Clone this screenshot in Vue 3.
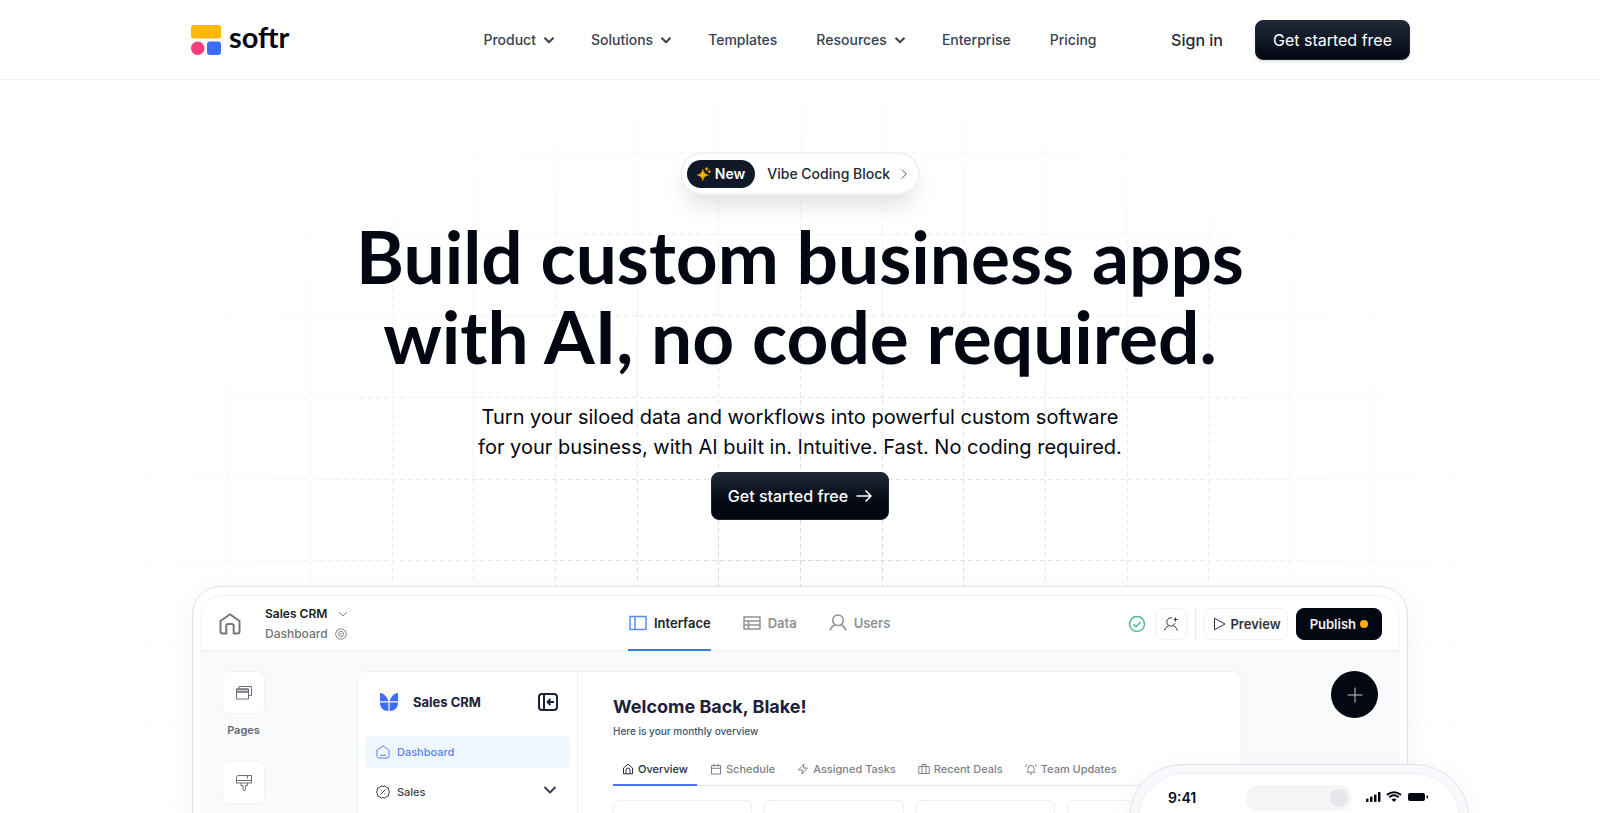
<script setup>
const navItems = [
  { label: 'Product', menu: true },
  { label: 'Solutions', menu: true },
  { label: 'Templates', menu: false },
  { label: 'Resources', menu: true },
  { label: 'Enterprise', menu: false },
  { label: 'Pricing', menu: false },
]

const editorTabs = [
  { label: 'Interface', icon: 'M2 3.5h16v13H2zM7 3.5v13', active: true },
  { label: 'Data', icon: 'M2 4h16v12H2zM2 8h16M2 12h16M6.5 8v8' },
  { label: 'Users', icon: 'M10 2a5.300 5.300 0 1 1 0 10.600a5.300 5.300 0 1 1 0-10.600M2 17.500c1-3.200 2.500-4.800 5-5.800M18 17.500c-1-3.200-2.500-4.800-5-5.800' },
]

const appTabs = [
  { label: 'Overview', icon: 'M1.500 5 6 1.200 10.500 5v5.800h-9zM4 10.800V7a2 2 0 0 1 4 0v3.800', active: true },
  { label: 'Schedule', icon: 'M1.500 2.500h9v8.500h-9zM1.500 5.300h9M3.800 1v2.500M8.200 1v2.500' },
  { label: 'Assigned Tasks', icon: 'M7 1 1.500 7H5.500L5 11 10.500 5H6.500z' },
  { label: 'Recent Deals', icon: 'M.8 3.500h10.400v7H.8zM4 10.500V1.500h4v9' },
  { label: 'Team Updates', icon: 'M2 9.200c1-1 1-2 1.200-4a2.800 2.800 0 0 1 5.600 0c.2 2 .2 3 1.200 4zM4.800 11h2.400M.8 4c0-1.200.5-2 1.200-2.700M11.200 4c0-1.200-.5-2-1.200-2.700' },
]

const at = (i) => Math.round((i * 245) / 3)
const columns = Array.from({ length: 19 }, (_, i) => 65 + at(i - 1))
const rows = Array.from({ length: 10 }, (_, i) => 72 + at(i))
</script>

<template>
  <div class="page">
    <header class="header">
      <div class="header-inner">
        <a class="logo" href="#" aria-label="softr">
          <svg width="30" height="30" viewBox="0 0 30 30" aria-hidden="true">
            <rect width="30" height="13.500" rx="2.500" fill="#ffb800" />
            <circle cx="6.700" cy="23.300" r="6.700" fill="#fa3c7d" />
            <rect x="16" y="16.500" width="14" height="13.500" rx="3" fill="#3b6cfa" />
          </svg>
          <span>softr</span>
        </a>
        <nav class="nav">
          <a v-for="item in navItems" :key="item.label" href="#">
            {{ item.label }}
            <svg v-if="item.menu" width="12" height="12" viewBox="0 0 12 12"><path d="M1.500 3.800 6 8.200 10.500 3.800" /></svg>
          </a>
        </nav>
        <div class="account">
          <a class="signin" href="#">Sign in</a>
          <a class="button small" href="#">Get started free</a>
        </div>
      </div>
    </header>

    <main class="hero">
      <svg class="grid" width="1600" height="734" viewBox="0 0 1600 734" aria-hidden="true">
        <path v-for="x in columns" :key="'c' + x" :d="`M${x}.5 0V734`" />
        <path v-for="y in rows" :key="'r' + y" :d="`M0 ${y}.5H1600`" />
      </svg>

      <a class="announce" href="#">
        <span class="badge">
          <svg width="14" height="14" viewBox="0 0 14 14" aria-hidden="true">
            <path d="M5.800 2.200C6.600 5.700 7.500 6.900 11.500 8 7.500 9.100 6.600 10.300 5.800 13.800 5 10.300 4.100 9.100.2 8 4.100 6.900 5 5.700 5.800 2.200zM9.700.1c.3 1.300.6 1.600 1.800 1.900-1.200.3-1.500.6-1.800 1.900-.3-1.300-.6-1.600-1.800-1.900 1.200-.3 1.500-.6 1.800-1.900zM12.400 3.100c.2 1.100.5 1.300 1.500 1.600-1 .2-1.300.5-1.500 1.600-.2-1.100-.5-1.400-1.500-1.600 1-.3 1.300-.5 1.500-1.600z" fill="#ffb000" stroke="#ffb000" stroke-width=".5" />
          </svg>
          New
        </span>
        <span>Vibe Coding Block</span>
        <svg class="next" width="6" height="10" viewBox="0 0 6 10" aria-hidden="true"><path d="M.8.5 5.300 5 .8 9.500" /></svg>
      </a>

      <h1>Build custom business apps<br />with AI, no code required.</h1>
      <p class="lead">
        Turn your siloed data and workflows into powerful custom software<br />for your business, with AI built in.
        Intuitive. Fast. No coding required.
      </p>
      <a class="button large" href="#">
        Get started free
        <svg width="16" height="14" viewBox="0 0 16 14" aria-hidden="true"><path d="M.5 7h14.500M9.500 1.500 15 7l-5.500 5.500" /></svg>
      </a>

      <div class="mockup">
        <div class="editor">
          <div class="toolbar">
            <div class="project">
              <svg class="home" width="22" height="22" viewBox="0 0 22 22"><path d="M1.500 8 11 1.200 20.500 8v10.500a2 2 0 0 1-2 2h-3.800V13a2 2 0 0 0-2-2H9.300a2 2 0 0 0-2 2v7.500H3.500a2 2 0 0 1-2-2z" /></svg>
              <div class="names">
                <span class="project-name">Sales CRM <svg width="10" height="6" viewBox="0 0 10 6"><path d="M1 1 5 5 9 1" /></svg></span>
                <span class="page-name">Dashboard <svg width="12" height="12" viewBox="0 0 12 12"><path d="M3.800 1h4.400L9 2.500h1.200L11.500 6l-1.300 3.500H9L8.200 11H3.800L3 9.500H1.800L.5 6l1.300-3.500H3zM6 3.200 8.300 4.600v2.800L6 8.800 3.700 7.400V4.600zM6 5v2" /></svg></span>
              </div>
            </div>
            <div class="editor-tabs">
              <a v-for="tab in editorTabs" :key="tab.label" href="#" :class="{ active: tab.active }">
                <svg width="20" height="20" viewBox="0 0 20 20"><path :d="tab.icon" /></svg>{{ tab.label }}
              </a>
            </div>
            <div class="actions">
              <svg class="saved" width="18" height="18" viewBox="0 0 18 18"><circle cx="9" cy="9" r="7.500" /><path d="m5.500 9.300 2.500 2.400 4.500-4.700" /></svg>
              <button class="tool square" type="button" aria-label="Invite user">
                <svg width="16" height="16" viewBox="0 0 16 16"><path d="M9.200 1.900A4.200 4.200 0 1 0 12 7.200M1.500 14.500c.8-2.400 2-3.700 4-4.500M14.500 14.500c-.8-2.400-2-3.700-4-4.500M12.500 1.500v4M10.500 3.500h4" /></svg>
              </button>
              <span class="divider"></span>
              <button class="tool preview" type="button">
                <svg width="13" height="14" viewBox="0 0 13 14"><path d="M1.500 1.200 12 7 1.500 12.800z" /></svg>Preview
              </button>
              <button class="tool publish" type="button">Publish<i></i></button>
            </div>
          </div>

          <div class="workspace">
            <div class="rail">
              <button class="tile" type="button" aria-labelledby="pages-label">
                <svg width="18" height="16" viewBox="0 0 18 16"><path fill="#c9cbce" d="M1.500 4h12v3h-12z" /><path d="M1.500 4h12v10h-12zM1.500 7h12M4 4V1.500h12.500v9h-3" /></svg>
              </button>
              <span id="pages-label" class="tile-label">Pages</span>
              <button class="tile" type="button" aria-label="Theme">
                <svg width="18" height="18" viewBox="0 0 18 18"><path d="M3.500 1.500h13V9h-15V3.500c0-1.200.8-2 2-2zM1.500 6.500h15M12.500 1.500v3M6 9v2.500h2V16q1.200 1.200 2.400 0v-4.500h2V9" /></svg>
              </button>
            </div>

            <div class="app">
              <aside class="side">
                <div class="brand">
                  <svg width="18" height="18" viewBox="0 0 18 18"><path fill="#3b6cfa" d="M0 0c4 .5 7 3.500 8.400 8.300H0zM18 0c-4 .5-7 3.500-8.400 8.300H18zM0 9.500h8.400V18C3.500 18 0 15 0 9.500zM18 9.500H9.600V18c4.900 0 8.400-3 8.400-8.500z" /></svg>
                  <strong>Sales CRM</strong>
                  <svg class="collapse" width="20" height="18" viewBox="0 0 20 18"><rect x="1" y="1" width="18" height="16" rx="3" /><path d="M6 1v16M16 9H9.500M12.500 6l-3 3 3 3" /></svg>
                </div>
                <a class="entry selected" href="#">
                  <svg width="14" height="14" viewBox="0 0 14 14"><path d="M1 5.200 7 1l6 4.200V11a2 2 0 0 1-2 2H3a2 2 0 0 1-2-2zM4 10.300h6" /></svg>Dashboard
                </a>
                <a class="entry" href="#">
                  <svg width="14" height="14" viewBox="0 0 14 14"><path d="M5 .8 7 1.500 9 .8l1.300 1.600 2.200.6.1 2.200L13.500 7l-.9 1.800-.1 2.200-2.200.6L9 13.200l-2-.7-2 .7-1.300-1.600L1.500 11l-.1-2.200L.5 7l.9-1.800L1.500 3l2.200-.6zM9.500 4.500l-5 5M4.700 4.700l.8.8M8.500 8.500l.8.8" /></svg>Sales
                  <svg class="more" width="14" height="8" viewBox="0 0 14 8"><path d="m1.500 1 5.500 5.500L12.500 1" /></svg>
                </a>
              </aside>
              <section class="content">
                <h2>Welcome Back, Blake!</h2>
                <p>Here is your monthly overview</p>
                <div class="app-tabs">
                  <a v-for="tab in appTabs" :key="tab.label" href="#" :class="{ active: tab.active }">
                    <svg width="12" height="12" viewBox="0 0 12 12"><path :d="tab.icon" /></svg>{{ tab.label }}
                  </a>
                </div>
                <div class="cards"><div v-for="n in 4" :key="n" class="card"></div></div>
              </section>
            </div>

            <button class="add" type="button" aria-label="Add">
              <svg width="16" height="16" viewBox="0 0 16 16"><path d="M8 .5v15M.5 8h15" /></svg>
            </button>
          </div>
        </div>

        <div class="phone">
          <div class="screen">
            <span class="time">9:41</span>
            <span class="island"><i></i></span>
            <svg width="62" height="12" viewBox="0 0 62 12" fill="#030712" aria-hidden="true">
              <rect x="0" y="7.500" width="2.500" height="3.500" rx=".8" /><rect x="4" y="5.500" width="2.500" height="5.500" rx=".8" /><rect x="8" y="3.500" width="2.500" height="7.500" rx=".8" /><rect x="12" y="1" width="2.500" height="10" rx=".8" />
              <path d="M28 11 25.500 8.400q2.500-2 5 0z" /><path d="M23.300 6.300q4.700-4 9.400 0M21 3.900q7-5.400 14 0" fill="none" stroke="#030712" stroke-width="2" />
              <rect x="42" y="2" width="17" height="8" rx="2" /><rect x="60.500" y="4.500" width="1.500" height="3" rx=".7" />
            </svg>
          </div>
        </div>
      </div>
    </main>
  </div>
</template>

<style>
body {
  background: #fff;
}
</style>

<style scoped>
.page {
  display: flex;
  flex-direction: column;
  height: 100vh;
  overflow: hidden;
  background: #fff;
  color: #030712;
  font-family: Inter, "Liberation Sans", sans-serif;
}
.page *,
.page {
  box-sizing: border-box;
}
a {
  color: inherit;
  text-decoration: none;
}
button {
  padding: 0;
  border: 0;
  font-family: inherit;
}
svg {
  flex: none;
  stroke-linejoin: round;
}
.header {
  flex: none;
  border-bottom: 1px solid #f0f0f1;
  background: #fff;
}
.header-inner {
  display: grid;
  grid-template-columns: 1fr auto 1fr;
  align-items: center;
  max-width: 1220px;
  height: 79px;
  margin: 0 auto;
}
.logo {
  display: flex;
  align-items: center;
  gap: 8px;
  padding-left: 1px;
  font: 700 29px/32px Lato, sans-serif;
}
.logo span {
  margin-top: -6px;
}
.nav {
  display: flex;
  gap: 39px;
  margin-right: 20px;
  color: #374151;
  font-size: 14px;
  font-weight: 500;
  line-height: 20px;
}
.nav a {
  display: flex;
  align-items: center;
}
.nav svg {
  margin: 0 -3px 0 7px;
  fill: none;
  stroke: #374151;
  stroke-width: 2;
}
.account {
  display: flex;
  justify-content: flex-end;
  align-items: center;
  gap: 32px;
}
.signin {
  color: #1f2937;
  font-size: 16px;
  font-weight: 500;
}
.button {
  display: flex;
  align-items: center;
  border: 1px solid #1c2533;
  border-radius: 8px;
  background: linear-gradient(#1f2937, #030712);
  color: #fff;
  font-size: 16px;
}
.small {
  height: 40px;
  padding: 0 17px;
  box-shadow: 0 2px 3px #0000001a;
}
.large {
  gap: 8px;
  height: 48px;
  padding: 0 16px;
  background: linear-gradient(#1f2937, #030712 65%);
  font-weight: 500;
}
.large svg {
  fill: none;
  stroke: #fff;
  stroke-width: 1.500;
}
.hero {
  position: relative;
  display: flex;
  flex: 1;
  flex-direction: column;
  align-items: center;
  min-height: 0;
  padding: 72px 24px 0;
}
.hero > * {
  flex: none;
  position: relative;
}
.hero > .grid {
  position: absolute;
  top: 0;
  left: 50%;
  margin-left: -800px;
  fill: none;
  stroke: #d5dae4;
  stroke-dasharray: 5 3;
  mask-image: radial-gradient(760px 580px at 50% 500px, #000, #0000);
}
.announce {
  display: flex;
  align-items: center;
  height: 43px;
  padding: 0 11px 0 5px;
  border: 2px solid #f1f2f4;
  border-radius: 22px;
  background: #fff;
  box-shadow: 0 14px 24px -6px #00000024;
  color: #1f2937;
  font-size: 14px;
  font-weight: 500;
}
.badge {
  display: flex;
  align-items: center;
  gap: 4px;
  height: 28px;
  margin-right: 12px;
  padding: 0 10px;
  border-radius: 14px;
  background: #111827;
  color: #fff;
  font-weight: 600;
}
.next {
  margin-left: 11px;
  fill: none;
  stroke: #4b5563;
}
h1 {
  margin: 21px 0 0;
  font: 700 73px/80px Lato, sans-serif;
  text-align: center;
}
.lead {
  margin: 26px 0 10px;
  font-size: 20px;
  line-height: 30px;
  text-align: center;
}
.mockup {
  width: 100%;
  max-width: 1216px;
  margin-top: 66px;
  padding: 8px;
  border: 1px solid #e1e2e7;
  border-radius: 28px;
  background: #fff;
  box-shadow: 0 8px 28px #0000000d;
}
.editor {
  overflow: hidden;
  border: 1px solid #f0f1f3;
  border-radius: 20px;
  background: #f9fafc;
}
.editor svg {
  fill: none;
  stroke: currentColor;
}
.toolbar {
  display: grid;
  grid-template-columns: 426px auto 1fr;
  height: 55px;
  padding-right: 16px;
  border-bottom: 1px solid #eeeff1;
  background: #fff;
}
.project {
  display: flex;
  align-items: center;
  gap: 24px;
  padding-left: 17px;
}
.editor .home {
  color: #74777c;
  stroke-width: 2;
}
.names {
  display: flex;
  flex-direction: column;
  font-size: 12px;
  line-height: 20px;
}
.names span {
  display: flex;
  align-items: center;
}
.project-name {
  gap: 11px;
  color: #202124;
  font-weight: 600;
}
.project-name svg,
.page-name svg {
  color: #8a8d92;
}
.page-name {
  gap: 7px;
  color: #707378;
  font-weight: 500;
}
.editor-tabs {
  display: flex;
  gap: 31px;
  color: #909295;
  font-size: 13px;
  font-weight: 600;
}
.editor-tabs svg {
  stroke-width: 1.500;
}
.editor-tabs a {
  display: flex;
  align-items: center;
  gap: 6px;
  height: 55px;
  border-bottom: 2px solid transparent;
}
.editor-tabs .active {
  border-color: #3b7ddd;
  color: #222327;
}
.editor-tabs .active svg {
  color: #5b8de6;
}
.actions {
  display: flex;
  justify-content: flex-end;
  align-items: center;
  gap: 8px;
}
.saved {
  margin-right: 1px;
  color: #4fb898;
  stroke-width: 1.500;
}
.tool {
  display: flex;
  justify-content: center;
  align-items: center;
  height: 32px;
  border: 1px solid #f0f0f2;
  border-radius: 8px;
  background: #fff;
  color: #33313a;
  font-size: 13px;
  font-weight: 600;
}
.square {
  width: 32px;
}
.divider {
  width: 1px;
  height: 32px;
  background: #e9eaec;
}
.preview {
  gap: 4px;
  padding: 0 6px 0 8px;
}
.publish {
  gap: 4px;
  padding: 0 13px;
  border-color: #030712;
  background: #030712;
  color: #f2f2f3;
}
.publish i {
  width: 8px;
  height: 8px;
  border-radius: 50%;
  background: #ffae0d;
}
.workspace {
  display: flex;
  align-items: flex-start;
  padding: 20px 20px 0;
}
.rail {
  display: flex;
  flex-direction: column;
  align-items: center;
  width: 43px;
  margin-right: 92px;
}
.tile {
  display: grid;
  place-items: center;
  width: 43px;
  height: 43px;
  border: 1px solid #f0f1f3;
  border-radius: 7px;
  background: #fff;
  color: #6c6f75;
}
.tile-label {
  margin: 8px 0 23px;
  color: #66696f;
  font-size: 11px;
  font-weight: 600;
  line-height: 16px;
}
.app {
  display: flex;
  flex: 1;
  min-height: 400px;
  border: 1px solid #eff0f2;
  border-radius: 8px;
  background: #fff;
}
.side {
  width: 220px;
  padding: 14px 7px 0;
  border-right: 1px solid #eff0f2;
}
.brand {
  display: flex;
  align-items: center;
  height: 32px;
  margin-bottom: 18px;
  padding: 0 12px 0 15px;
  color: #1a2138;
  font-size: 13px;
}
.brand strong {
  margin-left: 15px;
  font-weight: 700;
}
.editor .collapse {
  margin-left: auto;
  stroke-width: 2;
}
.editor .brand svg:first-child {
  stroke: none;
}
.entry {
  display: flex;
  align-items: center;
  gap: 7px;
  height: 32px;
  margin-bottom: 8px;
  padding: 0 13px 0 11px;
  border-radius: 4px;
  color: #39404f;
  font-size: 11px;
  font-weight: 500;
}
.selected {
  background: #eff8ff;
  color: #5d80f4;
}
.more {
  margin: -4px 0 0 auto;
  stroke-width: 2;
}
.content {
  flex: 1;
  padding: 23px 35px 0;
}
h2 {
  margin: 0;
  color: #1a2138;
  font-size: 18px;
  line-height: 24px;
}
.content p {
  margin: 4px 0 14px;
  color: #3c566e;
  font-size: 10px;
  font-weight: 500;
  line-height: 16px;
}
.app-tabs {
  display: flex;
  gap: 4px;
  border-bottom: 1px solid #e6e7ea;
  color: #7c818a;
  font-size: 11px;
  font-weight: 500;
}
.app-tabs a {
  display: flex;
  align-items: center;
  gap: 4px;
  height: 33px;
  margin-bottom: -1px;
  padding: 0 9px;
  border-bottom: 2px solid transparent;
}
.app-tabs .active {
  border-color: #4878f4;
  color: #272d3c;
}
.cards {
  display: grid;
  grid-template-columns: repeat(4, 1fr);
  gap: 12px;
  margin-top: 14px;
}
.card {
  height: 120px;
  border: 1px solid #eff0f2;
  border-radius: 6px;
}
.add {
  display: grid;
  place-items: center;
  width: 47px;
  height: 47px;
  margin-left: 89px;
  border-radius: 50%;
  background: #030712;
  color: #c9cacc;
}
.phone {
  position: absolute;
  top: 177px;
  right: -62px;
  width: 340px;
  height: 680px;
  padding: 8px;
  border: 1px solid #e1e2e7;
  border-radius: 54px;
  background: #f8f9fc;
  box-shadow: 0 6px 22px #0000000f;
}
.screen {
  display: grid;
  grid-template-columns: 107px 106px 1fr;
  align-items: start;
  height: 100%;
  padding: 11px 0 0;
  border: 1px solid #eff0f2;
  border-radius: 46px;
  background: #fff;
}
.time {
  padding-left: 29px;
  font-size: 14px;
  font-weight: 600;
  line-height: 25px;
}
.island {
  display: flex;
  justify-content: flex-end;
  align-items: center;
  height: 26px;
  padding-right: 4px;
  border-radius: 13px;
  background: #f3f5f7;
}
.island i {
  width: 18px;
  height: 18px;
  border-radius: 50%;
  background: #e5e7eb;
}
.screen svg {
  margin: 6px 0 0 14px;
}
</style>
